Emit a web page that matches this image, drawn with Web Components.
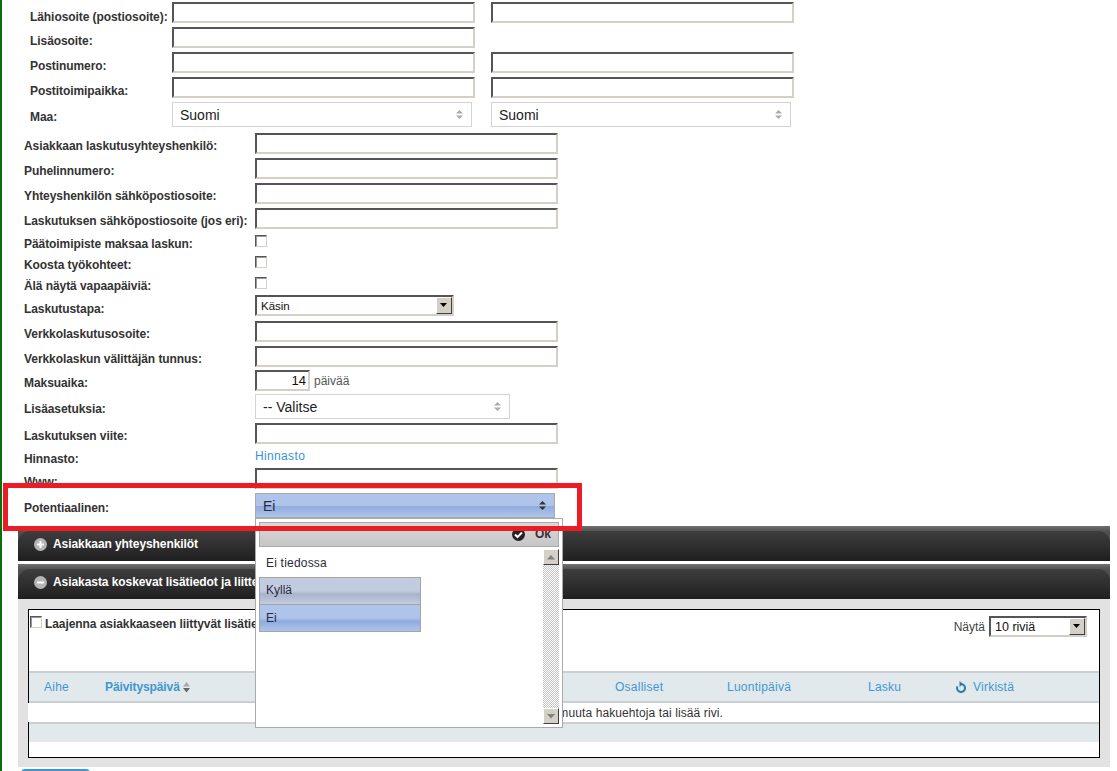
<!DOCTYPE html>
<html lang="fi">
<head>
<meta charset="utf-8">
<title>Asiakas</title>
<style>
  html, body { margin: 0; padding: 0; background: #fff; overflow: hidden; }
  body { font: 12px "Liberation Sans", Arial, sans-serif; color: #333; }
</style>
</head>
<body>
<customer-page></customer-page>

<script>
class TextBox extends HTMLElement {
  connectedCallback() {
    this.attachShadow({ mode: "open" });
    const value = this.getAttribute("value") || "";
    this.shadowRoot.innerHTML = `
      <style>
        :host {
          display: block;
          box-sizing: border-box;
          width: 303px;
          height: 21px;
          background: #fff;
          border-style: solid;
          border-width: 2px;
          border-color: #555 #d4d0c8 #d4d0c8 #555;
          font: 13px/17px "Liberation Sans", Arial, sans-serif;
          color: #111;
          text-align: right;
          padding-right: 2px;
        }
      </style>${value}`;
  }
}

class CheckBox extends HTMLElement {
  connectedCallback() {
    this.attachShadow({ mode: "open" });
    this.shadowRoot.innerHTML = `
      <style>
        :host {
          display: block;
          box-sizing: border-box;
          width: 12px;
          height: 12px;
          background: #fff;
          border-style: solid;
          border-width: 1px;
          border-color: #555 #d4d0c8 #d4d0c8 #555;
          box-shadow: inset 1px 1px 0 #999;
        }
      </style>`;
  }
}

class NativeSelect extends HTMLElement {
  connectedCallback() {
    this.attachShadow({ mode: "open" });
    this.shadowRoot.innerHTML = `
      <style>
        :host {
          display: flex;
          box-sizing: border-box;
          height: 21px;
          background: #fff;
          border-style: solid;
          border-width: 2px;
          border-color: #555 #d4d0c8 #d4d0c8 #555;
          color: #111;
        }
        .text { flex: 1; font: var(--sel-size, 12px)/19px "Liberation Sans", Arial, sans-serif; padding-left: 4px; }
        .arrow {
          box-sizing: border-box;
          width: 16px;
          height: 17px;
          background: #d4d0c8;
          border-style: solid;
          border-width: 1px;
          border-color: #fff #404040 #404040 #fff;
          display: flex;
          align-items: center;
          justify-content: center;
        }
        svg { display: block; }
      </style>
      <span class="text"><slot></slot></span>
      <span class="arrow"><svg width="8" height="5" viewBox="0 0 8 5"><path d="M0 0h7L3.500 4z" fill="#000"/></svg></span>`;
  }
}

class ChosenSelect extends HTMLElement {
  connectedCallback() {
    this.attachShadow({ mode: "open" });
    const active = this.hasAttribute("active");
    this.shadowRoot.innerHTML = `
      <style>
        :host {
          display: flex;
          align-items: center;
          box-sizing: border-box;
          height: 25px;
          padding: 0 8px 0 7px;
          background: #fff;
          border: 1px solid #d3d3d3;
          font: 14px "Liberation Sans", Arial, sans-serif;
          color: #222;
        }
        :host([active]) {
          border: 1px solid #aaa;
          background: linear-gradient(#aec4ea 0 50%, #8faade 50%, #aec4ea 100%);
          color: #2a2a3c;
        }
        :host([active]) .text { padding-top: 1px; }
        .text { flex: 1; }
        svg { display: block; }
      </style>
      <span class="text"><slot></slot></span>
      <svg width="7" height="9" viewBox="0 0 7 9"><path d="M3.500 0L7 3.500H0zM3.500 9L0 5.500h7z" fill="${active ? "#333" : "#aaa"}"/></svg>`;
  }
}

class FormRow extends HTMLElement {
  connectedCallback() {
    this.attachShadow({ mode: "open" });
    const label = this.getAttribute("label");
    this.shadowRoot.innerHTML = `
      <style>
        :host {
          display: flex;
          align-items: flex-start;
          height: ${this.getAttribute("h") || 25}px;
        }
        .label {
          box-sizing: border-box;
          width: var(--label-w);
          padding-left: var(--label-x);
          padding-top: ${this.getAttribute("top") || 6}px;
          font: bold 12px/14px "Liberation Sans", Arial, sans-serif;
          letter-spacing: -0.07px;
          color: #333;
          white-space: nowrap;
          flex: none;
        }
        .controls { display: flex; align-items: center; }
      </style>
      <span class="label">${label}</span>
      <span class="controls"><slot></slot></span>`;
  }
}

class SectionBar extends HTMLElement {
  connectedCallback() {
    this.attachShadow({ mode: "open" });
    const open = this.hasAttribute("open");
    this.shadowRoot.innerHTML = `
      <style>
        :host {
          display: block;
          height: 35px;
          background: linear-gradient(#707070, #4e4e4e 6px);
        }
        .inner {
          box-sizing: border-box;
          height: 30px;
          position: relative;
          top: 5px;
          border-radius: 12px 12px 0 0;
          background: linear-gradient(#3e3e3e, #1f1f1f);
          display: flex;
          align-items: center;
          gap: 6px;
          padding: 0 0 4px 16px;
          font: bold 12px "Liberation Sans", Arial, sans-serif;
          letter-spacing: -0.07px;
          color: #fff;
          white-space: nowrap;
        }
        svg { display: block; }
      </style>
      <div class="inner">
        <svg width="13" height="13" viewBox="0 0 13 13">
          <circle cx="6.500" cy="6.500" r="6.500" fill="#b4b4b4"/>
          <path d="${open ? "M3 5.500h7v2H3z" : "M3 5.500h2.500V3h2v2.500H10v2H7.500V10h-2V7.500H3z"}" fill="#fff"/>
        </svg>
        <slot></slot>
      </div>`;
  }
}

class InfoTable extends HTMLElement {
  connectedCallback() {
    this.attachShadow({ mode: "open" });
    this.shadowRoot.innerHTML = `
      <style>
        :host {
          display: block;
          box-sizing: border-box;
          height: 149px;
          border: 1px solid #000;
          background: #fff;
          font: 12px "Liberation Sans", Arial, sans-serif;
          color: #333;
        }
        .tools {
          box-sizing: border-box;
          height: 61px;
          display: flex;
          justify-content: space-between;
          padding: 6px 12px 0 1px;
        }
        .expand { display: flex; gap: 3px; font-weight: bold; letter-spacing: -0.07px; }
        .expand span { padding-top: 1px; }
        .show { display: flex; gap: 4px; --sel-size: 12.5px; }
        .show span { padding-top: 4px; color: #444; }
        .show native-select { width: 98px; }
        .head {
          box-sizing: border-box;
          height: 32px;
          background: #e2e9ed;
          border-top: 2px solid #c9cfd3;
          border-bottom: 2px solid #c9cfd3;
          display: grid;
          grid-template-columns: 61px 510px 112px 141px 87px auto;
          align-items: center;
          padding-left: 15px;
          color: #3f97cf;
          letter-spacing: .25px;
        }
        .sort { font-weight: bold; display: flex; align-items: center; gap: 2px; letter-spacing: -0.1px; }
        .refresh { display: flex; align-items: center; gap: 6px; }
        svg { display: block; }
        .empty {
          height: 19px;
          margin-left: -1px;
          padding-left: 1px;
          padding-right: 376px;
          background: #fff;
          position: relative;
          text-align: right;
          line-height: 20px;
          color: #333;
          letter-spacing: .1px;
          white-space: nowrap;
        }
        .foot {
          box-sizing: border-box;
          height: 20px;
          background: #e2e9ed;
          border-top: 2px solid #c9cfd3;
        }
      </style>
      <div class="tools">
        <div class="expand"><check-box></check-box><span>Laajenna asiakkaaseen liittyvät lisätiedot</span></div>
        <div class="show"><span>Näytä</span><native-select>10 riviä</native-select></div>
      </div>
      <div class="head">
        <span>Aihe</span>
        <span class="sort">Päivityspäivä
          <svg width="9" height="11" viewBox="0 0 9 11"><path d="M4.500 0L8 4.500H1z" fill="#aaa"/><path d="M1 6h7l-3.500 4.500z" fill="#666"/></svg>
        </span>
        <span>Osalliset</span>
        <span>Luontipäivä</span>
        <span>Lasku</span>
        <span class="refresh">
          <svg width="12" height="13" viewBox="0 0 12 13"><path d="M6 3a4 4 0 1 1-3.600 2.300" fill="none" stroke="#2a7ca8" stroke-width="2"/><path d="M4.500 0l3.500 3-3.500 3z" fill="#2a7ca8"/></svg>
          Virkistä
        </span>
      </div>
      <div class="empty">Ei löytynyt rivejä, kokeile muuta hakuehtoja tai lisää rivi.</div>
      <div class="foot"></div>`;
  }
}

class OptionPopup extends HTMLElement {
  connectedCallback() {
    this.attachShadow({ mode: "open" });
    this.shadowRoot.innerHTML = `
      <style>
        :host {
          display: block;
          box-sizing: border-box;
          position: absolute;
          left: 253px;
          top: 518px;
          width: 308px;
          height: 210px;
          background: #fff;
          border: 1px solid #aaa;
          padding: 3px;
          font: 12px "Liberation Sans", Arial, sans-serif;
          color: #2a2a3c;
        }
        .bar {
          box-sizing: border-box;
          height: 25px;
          background: linear-gradient(#d8d8d8, #c6c6c6);
          border: 1px solid #aaa;
          display: flex;
          justify-content: flex-end;
          align-items: flex-end;
          gap: 10px;
          padding: 0 7px 5px 0;
          font-weight: bold;
          color: #333;
        }
        svg { display: block; }
        .body { display: flex; height: 175px; padding-top: 2px; }
        .list { flex: 1; }
        .plain { padding: 7px 7px 0; height: 28px; box-sizing: border-box; letter-spacing: .2px; }
        .opt {
          box-sizing: border-box;
          width: 162px;
          height: 28px;
          border: 1px solid #a4a4a4;
          padding: 6px;
          margin-top: -1px;
          line-height: 13px;
        }
        .opt.first { margin-top: 0; background: linear-gradient(#c2cce0 0 50%, #a8b4cb 62%, #c2cce0 100%); }
        .opt.sel { padding-top: 7px; background: linear-gradient(#aec4ea 0 50%, #8faade 62%, #aec4ea 100%); }
        .scroll {
          width: 16px;
          display: flex;
          flex-direction: column;
          justify-content: space-between;
          background: repeating-conic-gradient(#c4c4c4 0 25%, #fff 0 50%) 0 0 / 2px 2px;
        }
        .btn {
          box-sizing: border-box;
          width: 16px;
          height: 16px;
          background: #d4d0c8;
          border-style: solid;
          border-width: 1px;
          border-color: #fff #404040 #404040 #fff;
          display: flex;
          align-items: center;
          justify-content: center;
        }
      </style>
      <div class="bar">
        <svg width="13" height="13" viewBox="0 0 13 13"><circle cx="6.500" cy="6.500" r="6.500" fill="#222"/><path d="M3 6.500l2.500 2.500L10 4.500" fill="none" stroke="#fff" stroke-width="2"/></svg>
        <span>Ok</span>
      </div>
      <div class="body">
        <div class="list">
          <div class="plain">Ei tiedossa</div>
          <div class="opt first">Kyllä</div>
          <div class="opt sel">Ei</div>
        </div>
        <div class="scroll">
          <span class="btn"><svg width="8" height="5" viewBox="0 0 8 5"><path d="M4 0l4 4.500H0z" fill="#808080"/></svg></span>
          <span class="btn"><svg width="8" height="5" viewBox="0 0 8 5"><path d="M0 0h8L4 4.500z" fill="#808080"/></svg></span>
        </div>
      </div>`;
  }
}

class CustomerPage extends HTMLElement {
  connectedCallback() {
    this.attachShadow({ mode: "open" });
    this.shadowRoot.innerHTML = `
      <style>
        :host {
          display: block;
          position: relative;
          box-sizing: border-box;
          height: 771px;
          overflow: hidden;
          border-left: 2px solid #0a6f0a;
        }
        .address { --label-x: 28px; --label-w: 170px; padding-top: 2px; }
        .address .gap { width: 16px; }
        .billing { --label-x: 22px; --label-w: 253px; margin-top: 6px; }
        a { color: #3a93d0; text-decoration: none; font-size: 12px; letter-spacing: .35px; }
        .link { padding-top: 1px; }
        .days { margin-left: 4px; color: #555; }
        .sections { margin: 8px 7px 0 16px; display: flex; flex-direction: column; gap: 3px; }
        .panel { margin-top: -3px; background: #e2e2e2; padding: 10px; height: 168px; box-sizing: border-box; }
        .save {
          display: block;
          margin: 2px 0 0 19px;
          width: 69px;
          height: 24px;
          border-radius: 4px 4px 0 0;
          background: #3f95d3;
        }
        .mark {
          position: absolute;
          left: 1px;
          top: 483px;
          width: 579px;
          height: 48px;
          box-sizing: border-box;
          border: 5px solid #ed1c24;
          z-index: 5;
        }
        option-popup { z-index: 3; }
        check-box { margin: 2px 0 0 0; }
        .raised { margin-top: -1px; }
      </style>
      <div class="address">
        <form-row label="Lähiosoite (postiosoite):" top="8"><text-box></text-box><span class="gap"></span><text-box></text-box></form-row>
        <form-row label="Lisäosoite:" top="7"><text-box></text-box></form-row>
        <form-row label="Postinumero:" top="7"><text-box></text-box><span class="gap"></span><text-box></text-box></form-row>
        <form-row label="Postitoimipaikka:" top="7"><text-box></text-box><span class="gap"></span><text-box></text-box></form-row>
        <form-row label="Maa:" top="8"><chosen-select style="width:300px">Suomi</chosen-select><span class="gap" style="width:19px"></span><chosen-select style="width:300px">Suomi</chosen-select></form-row>
      </div>
      <div class="billing">
        <form-row label="Asiakkaan laskutusyhteyshenkilö:"><text-box></text-box></form-row>
        <form-row label="Puhelinnumero:"><text-box></text-box></form-row>
        <form-row label="Yhteyshenkilön sähköpostiosoite:"><text-box></text-box></form-row>
        <form-row label="Laskutuksen sähköpostiosoite (jos eri):"><text-box></text-box></form-row>
        <form-row label="Päätoimipiste maksaa laskun:" h="21" top="4"><check-box></check-box></form-row>
        <form-row label="Koosta työkohteet:" h="21" top="4"><check-box></check-box></form-row>
        <form-row label="Älä näytä vapaapäiviä:" h="21" top="4"><check-box></check-box></form-row>
        <form-row label="Laskutustapa:"><native-select class="raised" style="width:199px;--sel-size:11.5px">Käsin</native-select></form-row>
        <form-row label="Verkkolaskutusosoite:"><text-box></text-box></form-row>
        <form-row label="Verkkolaskun välittäjän tunnus:" h="24"><text-box></text-box></form-row>
        <form-row label="Maksuaika:" h="24"><text-box value="14" style="width:55px"></text-box><span class="days">päivää</span></form-row>
        <form-row label="Lisäasetuksia:" h="29" top="8"><chosen-select style="width:255px">-- Valitse</chosen-select></form-row>
        <form-row label="Laskutuksen viite:"><text-box></text-box></form-row>
        <form-row label="Hinnasto:" h="20" top="4"><a class="link" href="#">Hinnasto</a></form-row>
        <form-row label="Www:" top="7"><text-box></text-box></form-row>
        <form-row label="Potentiaalinen:" top="8"><chosen-select active style="width:300px">Ei</chosen-select></form-row>
      </div>
      <div class="sections">
        <section-bar>Asiakkaan yhteyshenkilöt</section-bar>
        <section-bar open>Asiakasta koskevat lisätiedot ja liitteet</section-bar>
        <div class="panel"><info-table></info-table></div>
      </div>
      <span class="save"></span>
      <option-popup></option-popup>
      <div class="mark"></div>`;
  }
}

customElements.define("text-box", TextBox);
customElements.define("check-box", CheckBox);
customElements.define("native-select", NativeSelect);
customElements.define("chosen-select", ChosenSelect);
customElements.define("form-row", FormRow);
customElements.define("section-bar", SectionBar);
customElements.define("info-table", InfoTable);
customElements.define("option-popup", OptionPopup);
customElements.define("customer-page", CustomerPage);
</script>
</body>
</html>
